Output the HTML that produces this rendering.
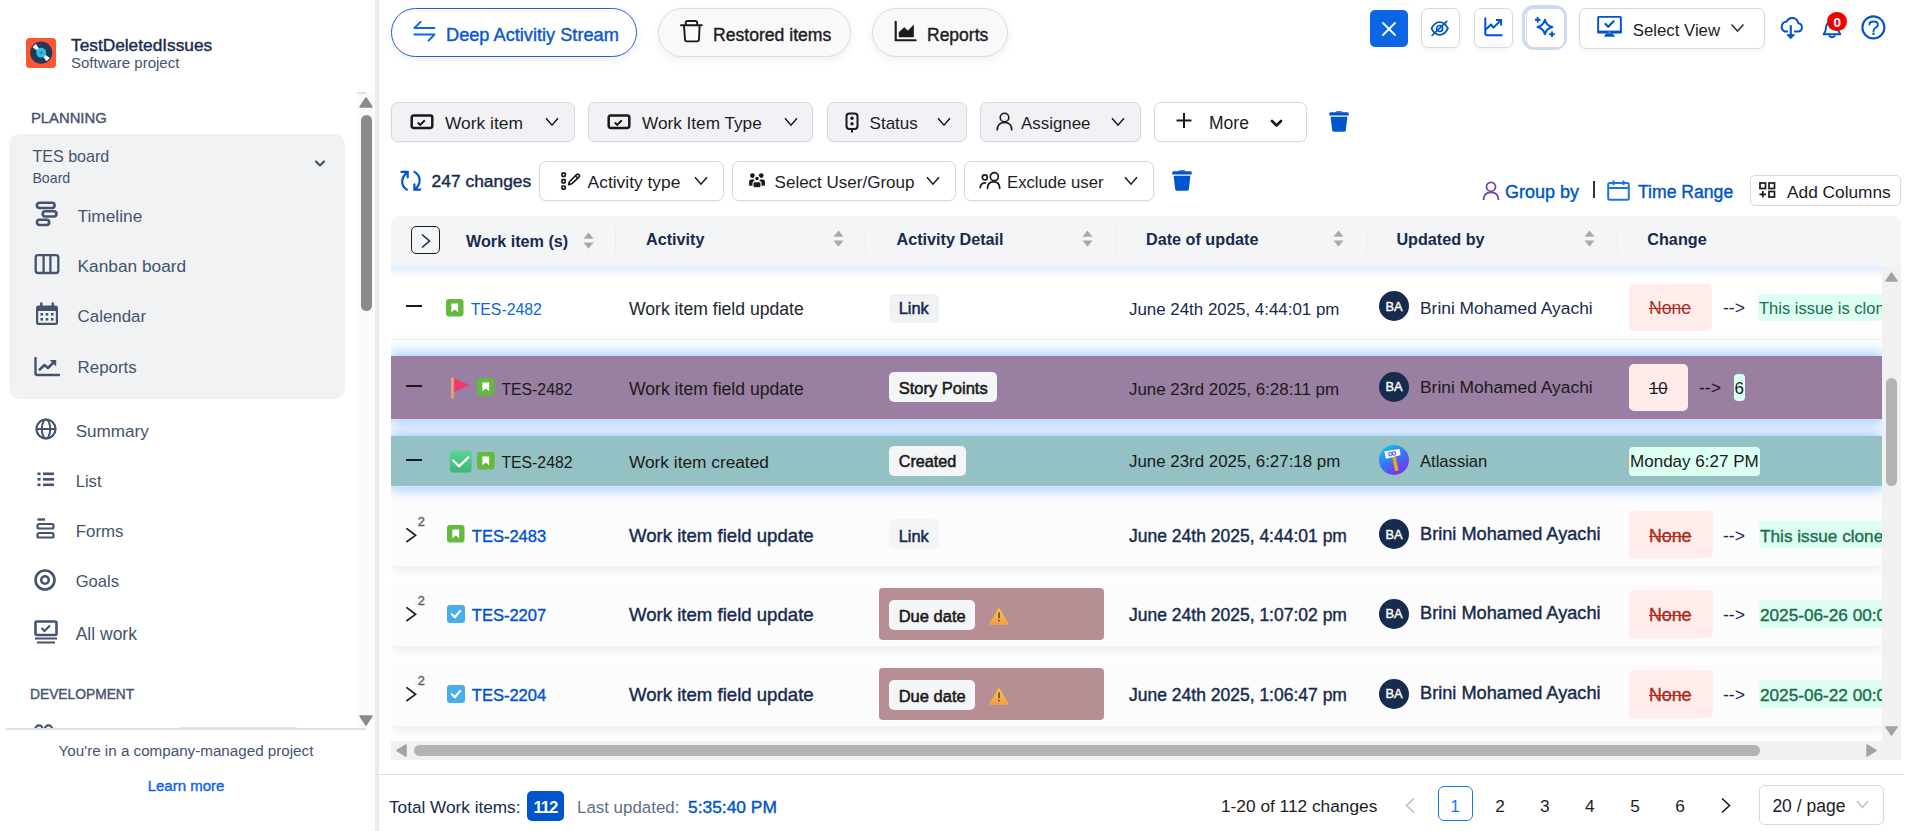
<!DOCTYPE html>
<html><head><meta charset="utf-8"><title>Deep Activity Stream</title>
<style>
html,body{margin:0;padding:0;background:#fff;width:1915px;height:831px;overflow:hidden}
body{position:relative;font-family:"Liberation Sans",sans-serif}
.t{position:absolute;white-space:nowrap;line-height:1}
.b{position:absolute;box-sizing:content-box}
</style></head><body>
<svg class="b" style="left:26px;top:38px" width="30" height="30" viewBox="0 0 30 30">
<rect width="30" height="30" rx="3.5" fill="#ff5630"/>
<circle cx="15.2" cy="14.7" r="11.1" fill="#253858"/>
<g transform="translate(15.2 14.7) rotate(45)" fill="#fff"><path d="M-9.9 -2.3 V2.3 L-4.3 1.4 V-1.4 Z"/><path d="M9.9 -2.3 V2.3 L4.3 1.4 V-1.4 Z"/></g>
<circle cx="15.2" cy="14.7" r="4.9" fill="#1fc7e8"/>
<circle cx="15.2" cy="14.7" r="1.6" fill="#8a5bd8"/>
</svg>
<div class="t" style="left:71px;top:37.00px;font-size:17.3px;font-weight:400;color:#172b4d;-webkit-text-stroke:0.4px currentColor;">TestDeletedIssues</div>
<div class="t" style="left:71px;top:55.00px;font-size:15px;font-weight:400;color:#44546f;">Software project</div>
<div class="t" style="left:31px;top:111.00px;font-size:14.8px;font-weight:400;color:#44546f;-webkit-text-stroke:0.4px currentColor;">PLANNING</div>
<div class="b" style="left:9px;top:134px;width:336px;height:265px;background:#f1f2f4;border-radius:10px"></div>
<div class="t" style="left:32.4px;top:148.00px;font-size:16.1px;font-weight:400;color:#44546f;">TES board</div>
<div class="t" style="left:32.4px;top:171.00px;font-size:14.2px;font-weight:400;color:#44546f;">Board</div>
<svg class="b" style="left:314px;top:159px;" width="12" height="10" viewBox="0 0 12 10" fill="none"><path d="M2 2.5 L6 6.5 L10 2.5" stroke="#44546f" stroke-width="2.2" stroke-linecap="round" stroke-linejoin="round"/></svg>
<svg class="b" style="left:35px;top:201px;" width="24" height="26" viewBox="0 0 24 26" fill="none"><rect x="1.9" y="1.7" width="17.7" height="5.3" rx="2.65" stroke="#44546f" stroke-width="2.6"/><rect x="7.7" y="10.2" width="13.8" height="5.3" rx="2.65" stroke="#44546f" stroke-width="2.6"/><rect x="1.9" y="18.7" width="12.3" height="5.3" rx="2.65" stroke="#44546f" stroke-width="2.6"/></svg>
<div class="t" style="left:77.6px;top:208.00px;font-size:17.3px;font-weight:400;color:#44546f;">Timeline</div>
<svg class="b" style="left:34px;top:253px;" width="26" height="22" viewBox="0 0 26 22" fill="none"><rect x="1.7" y="2.2" width="22.6" height="17.8" rx="2.2" stroke="#44546f" stroke-width="2.3"/><path d="M9.6 2.5 V19.5 M16.4 2.5 V19.5" stroke="#44546f" stroke-width="2.3"/></svg>
<div class="t" style="left:77.6px;top:258.00px;font-size:17.3px;font-weight:400;color:#44546f;">Kanban board</div>
<svg class="b" style="left:35px;top:302px;" width="24" height="24" viewBox="0 0 24 24" fill="none"><rect x="1" y="3.5" width="22" height="19.5" rx="2.5" fill="#44546f"/><rect x="3.2" y="9" width="17.6" height="11.8" fill="#f1f2f4"/><rect x="5" y="0.5" width="2.5" height="5" fill="#44546f"/><rect x="16.5" y="0.5" width="2.5" height="5" fill="#44546f"/><g fill="#44546f"><rect x="5.5" y="11" width="2.6" height="2.6"/><rect x="10.7" y="11" width="2.6" height="2.6"/><rect x="15.9" y="11" width="2.6" height="2.6"/><rect x="5.5" y="16" width="2.6" height="2.6"/><rect x="10.7" y="16" width="2.6" height="2.6"/><rect x="15.9" y="16" width="2.6" height="2.6"/></g></svg>
<div class="t" style="left:77.6px;top:309.00px;font-size:16.9px;font-weight:400;color:#44546f;">Calendar</div>
<svg class="b" style="left:34px;top:357px;" width="26" height="20" viewBox="0 0 26 20" fill="none"><path d="M1.5 1 V16 Q1.5 18 3.5 18 H25" stroke="#44546f" stroke-width="2.4" stroke-linecap="round"/><path d="M5.8 12.5 L10.5 8 L14 11 L20.5 4.5" stroke="#44546f" stroke-width="2.6" stroke-linejoin="round" stroke-linecap="round"/><path d="M15.8 3 H22.2 V9.4 Z" fill="#44546f"/></svg>
<div class="t" style="left:77.6px;top:360.00px;font-size:16.9px;font-weight:400;color:#44546f;">Reports</div>
<svg class="b" style="left:35px;top:418px;" width="22" height="22" viewBox="0 0 22 22" fill="none"><circle cx="11" cy="11" r="9.5" stroke="#44546f" stroke-width="2.2"/><ellipse cx="11" cy="11" rx="4.2" ry="9.5" stroke="#44546f" stroke-width="2"/><path d="M1.5 11 H20.5" stroke="#44546f" stroke-width="2"/></svg>
<div class="t" style="left:75.7px;top:423.00px;font-size:17.1px;font-weight:400;color:#44546f;">Summary</div>
<svg class="b" style="left:37px;top:472px;" width="18" height="15" viewBox="0 0 18 15" fill="none"><g fill="#44546f"><rect x="0.5" y="0.5" width="3" height="2.6"/><rect x="0.5" y="6" width="3" height="2.6"/><rect x="0.5" y="11.5" width="3" height="2.6"/><rect x="6" y="0.5" width="11" height="2.6"/><rect x="6" y="6" width="11" height="2.6"/><rect x="6" y="11.5" width="11" height="2.6"/></g></svg>
<div class="t" style="left:75.7px;top:474.00px;font-size:16.6px;font-weight:400;color:#44546f;">List</div>
<svg class="b" style="left:36px;top:518px;" width="20" height="22" viewBox="0 0 20 22" fill="none"><path d="M1.5 1.5 H9" stroke="#44546f" stroke-width="2.4"/><rect x="1.5" y="6" width="16" height="4.5" rx="1.5" stroke="#44546f" stroke-width="2.2"/><rect x="1.5" y="15" width="16" height="4.5" rx="1.5" stroke="#44546f" stroke-width="2.2"/></svg>
<div class="t" style="left:75.7px;top:524.00px;font-size:16.9px;font-weight:400;color:#44546f;">Forms</div>
<svg class="b" style="left:34px;top:569px;" width="22" height="22" viewBox="0 0 22 22" fill="none"><circle cx="11" cy="11" r="9.5" stroke="#44546f" stroke-width="2.6"/><circle cx="11" cy="11" r="3.8" stroke="#44546f" stroke-width="2.6"/></svg>
<div class="t" style="left:75.7px;top:574.00px;font-size:16.6px;font-weight:400;color:#44546f;">Goals</div>
<svg class="b" style="left:34px;top:620px;" width="24" height="24" viewBox="0 0 24 24" fill="none"><rect x="1.5" y="1.5" width="21" height="13.5" rx="1.5" stroke="#44546f" stroke-width="2.6"/><path d="M7.5 8 L10.5 11 L16 5.5" stroke="#44546f" stroke-width="2.2"/><path d="M1 18.5 H23 M3 22.5 H21" stroke="#44546f" stroke-width="2.2"/></svg>
<div class="t" style="left:75.7px;top:626.00px;font-size:17.5px;font-weight:400;color:#44546f;">All work</div>
<div class="t" style="left:30px;top:688.00px;font-size:13.8px;font-weight:400;color:#44546f;-webkit-text-stroke:0.4px currentColor;">DEVELOPMENT</div>
<svg class="b" style="left:34px;top:724px;" width="20" height="5" viewBox="0 0 20 5" fill="none"><circle cx="5" cy="5" r="3.6" stroke="#44546f" stroke-width="2.2"/><circle cx="14.5" cy="5" r="3.6" stroke="#44546f" stroke-width="2.2"/></svg>
<div class="b" style="left:179px;top:727px;width:118px;height:2px;background:#e6e4f4"></div>
<div class="b" style="left:357px;top:92px;width:18px;height:637px;background:#fafafa"></div>
<div class="b" style="left:357px;top:92px;width:9px;height:2px;background:#dde0e5"></div>
<svg class="b" style="left:359px;top:97px;" width="14" height="11" viewBox="0 0 14 11" fill="none"><path d="M7 1 L13 10 H1 Z" fill="#8a8a8a" stroke="#8a8a8a" stroke-linejoin="round" stroke-width="1.5"/></svg>
<div class="b" style="left:361px;top:115px;width:11px;height:196px;background:#8b8b8b;border-radius:6px"></div>
<svg class="b" style="left:359px;top:715px;" width="14" height="11" viewBox="0 0 14 11" fill="none"><path d="M1 1 H13 L7 10 Z" fill="#8a8a8a" stroke="#8a8a8a" stroke-linejoin="round" stroke-width="1.5"/></svg>
<div class="b" style="left:6px;top:728px;width:360px;height:2px;background:#dcdfe4"></div>
<div class="t" style="left:186px;top:743.00px;font-size:15.2px;font-weight:400;color:#44546f;transform:translateX(-50%);">You're in a company-managed project</div>
<div class="t" style="left:186px;top:778.00px;font-size:15px;font-weight:400;color:#0c66e4;transform:translateX(-50%);-webkit-text-stroke:0.4px currentColor;">Learn more</div>
<div class="b" style="left:375px;top:0px;width:4px;height:831px;background:#ebecf0"></div>
<div class="b" style="left:391px;top:8px;width:244px;height:47px;border:1.5px solid #1d62d8;border-radius:26px;background:#fff;box-shadow:0 3px 8px rgba(0,0,0,.07)"></div>
<svg class="b" style="left:413px;top:21px;" width="23" height="22" viewBox="0 0 23 22" fill="none"><path d="M7.6 0.9 L1.4 7 H21.4" stroke="#0c66e4" stroke-width="2" stroke-linecap="round" stroke-linejoin="round"/><path d="M1.4 13.6 H21.4 L15.6 19.6" stroke="#0c66e4" stroke-width="2" stroke-linecap="round" stroke-linejoin="round"/></svg>
<div class="t" style="left:446px;top:26.00px;font-size:18.2px;font-weight:400;color:#0b57d0;-webkit-text-stroke:0.4px currentColor;">Deep Activitiy Stream</div>
<div class="b" style="left:658px;top:8px;width:191px;height:47px;border:1px solid #dcdcdc;border-radius:26px;background:#f9f9f9;box-shadow:0 3px 8px rgba(0,0,0,.07)"></div>
<svg class="b" style="left:680px;top:19px;" width="23" height="25" viewBox="0 0 23 25" fill="none"><path d="M1 6.3 H21.8" stroke="#1a1a1a" stroke-width="1.9" stroke-linecap="round"/><path d="M5.7 6 V4 Q5.7 2 7.7 2 H15.2 Q17.2 2 17.2 4 V6" stroke="#1a1a1a" stroke-width="1.9"/><path d="M4 6.7 L5 20.5 Q5.2 22.4 7 22.4 H17 Q18.8 22.4 19 20.5 L19.6 6.7" stroke="#1a1a1a" stroke-width="1.9" stroke-linejoin="round"/></svg>
<div class="t" style="left:713px;top:27.00px;font-size:17.6px;font-weight:400;color:#1d1d1f;-webkit-text-stroke:0.4px currentColor;">Restored items</div>
<div class="b" style="left:872px;top:8px;width:134px;height:47px;border:1px solid #dcdcdc;border-radius:26px;background:#f9f9f9;box-shadow:0 3px 8px rgba(0,0,0,.07)"></div>
<svg class="b" style="left:893px;top:20px;" width="24" height="22" viewBox="0 0 24 22" fill="none"><path d="M2.7 1.7 V20.3 H22.7" stroke="#1a1a1a" stroke-width="2.1" stroke-linecap="round"/><path d="M6.1 12.3 L11.2 7.6 L14.9 11 L20.6 5.1 V16.9 H6.1 Z" fill="#1a1a1a" stroke="#1a1a1a" stroke-width=".6" stroke-linejoin="round"/></svg>
<div class="t" style="left:927px;top:27.00px;font-size:17.5px;font-weight:400;color:#1d1d1f;-webkit-text-stroke:0.4px currentColor;">Reports</div>
<div class="b" style="left:1370px;top:10px;width:38px;height:37px;background:#0c66e4;border-radius:5px"></div>
<svg class="b" style="left:1382px;top:22px;" width="14" height="14" viewBox="0 0 14 14" fill="none"><path d="M1 1 L13 13 M13 1 L1 13" stroke="#fff" stroke-width="1.8" stroke-linecap="round"/></svg>
<div class="b" style="left:1420.5px;top:8px;width:37px;height:38px;border:1px solid #d9d9d9;border-radius:7px;background:#fff;box-shadow:0 2px 4px rgba(0,0,0,.05)"></div>
<div class="b" style="left:1473.5px;top:8px;width:37px;height:38px;border:1px solid #d9d9d9;border-radius:7px;background:#fff;box-shadow:0 2px 4px rgba(0,0,0,.05)"></div>
<div class="b" style="left:1521.75px;top:4.5px;width:38.75px;height:39px;border:3.75px solid #c8dbf4;border-radius:12px"></div>
<div class="b" style="left:1525.5px;top:8.25px;width:37px;height:37.3px;border:1px solid #d8d8d8;border-radius:8px;background:#fff"></div>
<svg class="b" style="left:1430px;top:19px;" width="20" height="18" viewBox="0 0 20 18" fill="none"><path d="M1.5 9.5 C4 4.5 7 3.2 9.7 3.2 C12.4 3.2 15.4 4.5 17.9 9.5 C15.4 14.5 12.4 15.8 9.7 15.8 C7 15.8 4 14.5 1.5 9.5 Z" stroke="#0055cc" stroke-width="1.7"/><circle cx="9.6" cy="9.5" r="3" stroke="#0055cc" stroke-width="1.7"/><path d="M16.8 2.4 L2.1 16.5" stroke="#0055cc" stroke-width="1.7" stroke-linecap="round"/></svg>
<svg class="b" style="left:1483px;top:17px;" width="20" height="20" viewBox="0 0 20 20" fill="none"><path d="M2.3 1.3 V16.3 Q2.3 18.3 4.3 18.3 H18.7" stroke="#0055cc" stroke-width="2" stroke-linecap="round"/><path d="M2.3 12.9 L8 7.5 L10.5 10.6 L18.1 3" stroke="#0055cc" stroke-width="2" stroke-linejoin="round"/><path d="M13 3 H18.1 V8.4" stroke="#0055cc" stroke-width="2"/></svg>
<svg class="b" style="left:1534px;top:17px;" width="24" height="22" viewBox="0 0 24 22" fill="none"><path d="M10.9 2.7 Q12.4 8.5 18.3 10 Q12.4 11.5 10.9 17.3 Q9.4 11.5 3.5 10 Q9.4 8.5 10.9 2.7 Z" stroke="#0055cc" stroke-width="2" stroke-linejoin="round"/><path d="M3.7 0 V5.6 M0.9 2.8 H6.5" stroke="#0055cc" stroke-width="1.9"/><path d="M18 14.4 V20 M15.2 17.2 H20.8" stroke="#0055cc" stroke-width="1.9"/></svg>
<div class="b" style="left:1578.5px;top:8px;width:184px;height:38.5px;border:1px solid #d9d9d9;border-radius:7px;background:#fff;box-shadow:0 2px 4px rgba(0,0,0,.05)"></div>
<svg class="b" style="left:1597px;top:15px;" width="26" height="23" viewBox="0 0 26 23" fill="none"><rect x="1.15" y="1.85" width="22.7" height="15.4" stroke="#0055cc" stroke-width="1.9" rx=".6"/><path d="M0.5 17 H24.5" stroke="#0055cc" stroke-width="2.8"/><path d="M8.4 8.9 L11.3 11.8 L16.6 6.2" stroke="#0055cc" stroke-width="2.1" stroke-linecap="round" stroke-linejoin="round"/><path d="M9 18.6 H16 L18 21.7 H7 Z" fill="#0055cc"/><circle cx="12.5" cy="17" r=".6" fill="#fff"/></svg>
<div class="t" style="left:1632.7px;top:23.00px;font-size:16.8px;font-weight:400;color:#1d1d1f;">Select View</div>
<svg class="b" style="left:1730px;top:23px;" width="15" height="10" viewBox="0 0 15 10" fill="none"><path d="M1.5 1.5 L7.5 8 L13.5 1.5" stroke="#333" stroke-width="1.6"/></svg>
<svg class="b" style="left:1778px;top:16px;" width="27" height="24" viewBox="0 0 27 24" fill="none"><path d="M10 15.5 H6.8 A5.3 5.3 0 0 1 8.7 5.4 A6.1 6.1 0 0 1 20.2 7.2 A4.2 4.2 0 0 1 20.5 15.5 H16" stroke="#0055cc" stroke-width="2" stroke-linejoin="round"/><path d="M12.8 9.2 V19.5" stroke="#0055cc" stroke-width="2.1"/><path d="M9.3 18.8 L12.8 22.4 L16.3 18.8 Z" fill="#0055cc" stroke="#0055cc" stroke-width="1.2" stroke-linejoin="round"/></svg>
<svg class="b" style="left:1822px;top:19px;" width="20" height="20" viewBox="0 0 20 20" fill="none"><path d="M1.6 15.2 Q3.8 13 3.8 9.5 Q3.8 3.2 10 3.2 Q16.2 3.2 16.2 9.5 Q16.2 13 18.4 15.2 Z" stroke="#0055cc" stroke-width="1.9" stroke-linejoin="round"/><path d="M7 16.3 Q10 20.2 13.2 16.3" stroke="#0055cc" stroke-width="1.9"/></svg>
<div class="b" style="left:1827px;top:11.6px;width:19.8px;height:19.8px;border-radius:50%;background:#f00000"></div>
<div class="t" style="left:1837.3px;top:16.00px;font-size:13.5px;font-weight:700;color:#fff;transform:translateX(-50%);">0</div>
<svg class="b" style="left:1860px;top:14px;" width="27" height="27" viewBox="0 0 27 27" fill="none"><circle cx="13.4" cy="13.4" r="11" stroke="#0055cc" stroke-width="2.1"/><path d="M9.4 10.6 Q9.4 7.5 13.5 7.5 Q17.9 7.5 17.9 10.6 Q17.9 12.8 15.2 14 Q13.5 14.8 13.5 17.2" stroke="#0055cc" stroke-width="1.9" stroke-linecap="round"/><circle cx="13.5" cy="19.8" r="1.25" fill="#0055cc"/></svg>
<div class="b" style="left:391px;top:102px;width:182px;height:38px;border:1px solid #d8d8dc;border-radius:7px;background:#f2f2f6;box-shadow:0 1px 2px rgba(0,0,0,.05)"></div>
<svg class="b" style="left:410px;top:114px;" width="24" height="16" viewBox="0 0 24 16" fill="none"><rect x="1.7" y="1.5" width="20.6" height="12.4" rx="1.8" stroke="#1a1a1a" stroke-width="2.5"/><path d="M7.8 8.6 L10.2 10.9 L14.8 6.3" stroke="#1a1a1a" stroke-width="2.1"/></svg>
<div class="t" style="left:445px;top:115.00px;font-size:17.4px;font-weight:400;color:#1d1d1f;">Work item</div>
<svg class="b" style="left:544.5px;top:116.5px;" width="14" height="10" viewBox="0 0 14 10" fill="none"><path d="M1 1.2 L7 8.2 L13 1.2" stroke="#1a1a1a" stroke-width="1.5"/></svg>
<div class="b" style="left:588px;top:102px;width:223px;height:38px;border:1px solid #d8d8dc;border-radius:7px;background:#f2f2f6;box-shadow:0 1px 2px rgba(0,0,0,.05)"></div>
<svg class="b" style="left:607px;top:114px;" width="24" height="16" viewBox="0 0 24 16" fill="none"><rect x="1.7" y="1.5" width="20.6" height="12.4" rx="1.8" stroke="#1a1a1a" stroke-width="2.5"/><path d="M7.8 8.6 L10.2 10.9 L14.8 6.3" stroke="#1a1a1a" stroke-width="2.1"/></svg>
<div class="t" style="left:642px;top:115.00px;font-size:17.2px;font-weight:400;color:#1d1d1f;">Work Item Type</div>
<svg class="b" style="left:784px;top:116.5px;" width="14" height="10" viewBox="0 0 14 10" fill="none"><path d="M1 1.2 L7 8.2 L13 1.2" stroke="#1a1a1a" stroke-width="1.5"/></svg>
<div class="b" style="left:826.5px;top:102px;width:138.5px;height:38px;border:1px solid #d8d8dc;border-radius:7px;background:#f2f2f6;box-shadow:0 1px 2px rgba(0,0,0,.05)"></div>
<svg class="b" style="left:845px;top:112px;" width="14" height="21" viewBox="0 0 14 21" fill="none"><rect x="1.5" y="1.5" width="11" height="15.5" rx="3" stroke="#1a1a1a" stroke-width="2"/><circle cx="7" cy="6.2" r="1.7" fill="#1a1a1a"/><circle cx="7" cy="11.8" r="1.7" fill="#1a1a1a"/><path d="M7 17 V20.5" stroke="#1a1a1a" stroke-width="2"/></svg>
<div class="t" style="left:869.6px;top:115.00px;font-size:17px;font-weight:400;color:#1d1d1f;">Status</div>
<svg class="b" style="left:936.5px;top:116.5px;" width="14" height="10" viewBox="0 0 14 10" fill="none"><path d="M1 1.2 L7 8.2 L13 1.2" stroke="#1a1a1a" stroke-width="1.5"/></svg>
<div class="b" style="left:980px;top:102px;width:159px;height:38px;border:1px solid #d8d8dc;border-radius:7px;background:#f2f2f6;box-shadow:0 1px 2px rgba(0,0,0,.05)"></div>
<svg class="b" style="left:996px;top:112px;" width="17" height="19" viewBox="0 0 17 19" fill="none"><circle cx="8.5" cy="5.5" r="4.3" stroke="#1a1a1a" stroke-width="1.6"/><path d="M1.2 18.5 Q1.2 10.5 8.5 10.5 Q15.8 10.5 15.8 18.5" stroke="#1a1a1a" stroke-width="1.6"/></svg>
<div class="t" style="left:1021px;top:116.00px;font-size:16.9px;font-weight:400;color:#1d1d1f;">Assignee</div>
<svg class="b" style="left:1110.5px;top:116.5px;" width="14" height="10" viewBox="0 0 14 10" fill="none"><path d="M1 1.2 L7 8.2 L13 1.2" stroke="#1a1a1a" stroke-width="1.5"/></svg>
<div class="b" style="left:1153.5px;top:102px;width:151.5px;height:38px;border:1px solid #d8d8dc;border-radius:7px;background:#fff;box-shadow:0 1px 2px rgba(0,0,0,.05)"></div>
<svg class="b" style="left:1175px;top:112px;" width="18" height="18" viewBox="0 0 18 18" fill="none"><path d="M9 1 V16 M1.5 8.5 H16.5" stroke="#1a1a1a" stroke-width="2"/></svg>
<div class="t" style="left:1209px;top:115.00px;font-size:17.5px;font-weight:400;color:#1d1d1f;">More</div>
<svg class="b" style="left:1270px;top:119px;" width="13" height="9" viewBox="0 0 13 9" fill="none"><path d="M2 2 L6.5 6.5 L11 2" stroke="#1a1a1a" stroke-width="2.6" stroke-linecap="round" stroke-linejoin="round"/></svg>
<svg class="b" style="left:1329px;top:111px;" width="20" height="21" viewBox="0 0 20 21" fill="none"><path d="M6.3 1.6 Q6.6 0.2 8 0.2 H12 Q13.4 0.2 13.7 1.6 Z" fill="#0055cc"/><path d="M0.3 2.6 Q0.3 1.3 1.8 1.3 H18.2 Q19.7 1.3 19.7 2.6 V4.6 H0.3 Z" fill="#0055cc"/><path d="M1.6 5.8 H18.4 L16.8 19.3 Q16.6 20.7 15.2 20.7 H4.8 Q3.4 20.7 3.2 19.3 Z" fill="#0055cc"/></svg>
<svg class="b" style="left:399px;top:169px;" width="23" height="23" viewBox="0 0 23 23" fill="none"><path d="M7.9 20.6 C4.5 18.6 3.1 15.6 3.2 12.3 C3.3 8.8 5 6 8.2 3.3" stroke="#0055cc" stroke-width="2.2" stroke-linecap="round"/><path d="M2.5 2.9 H8.7 V8.3" stroke="#0055cc" stroke-width="2.2" stroke-linecap="round"/><path d="M15.4 2.9 C18.8 4.8 20.6 8 20.6 11.4 C20.6 14.8 19 17.6 15.9 20.1" stroke="#0055cc" stroke-width="2.2" stroke-linecap="round"/><path d="M15.4 15.3 V20.6 H21.2" stroke="#0055cc" stroke-width="2.2" stroke-linecap="round"/></svg>
<div class="t" style="left:431.6px;top:173.00px;font-size:17.4px;font-weight:400;color:#172b4d;-webkit-text-stroke:0.4px currentColor;">247 changes</div>
<div class="b" style="left:538.5px;top:161px;width:183.0px;height:37.5px;border:1px solid #d8d8dc;border-radius:7px;background:#fff;box-shadow:0 1px 2px rgba(0,0,0,.05)"></div>
<svg class="b" style="left:560px;top:172px;" width="21" height="21" viewBox="0 0 21 21" fill="none"><rect x="2" y="1.1" width="3.2" height="3.2" rx=".6" stroke="#1a1a1a" stroke-width="1.7"/><rect x="2" y="7.7" width="3.2" height="3.2" rx=".6" stroke="#1a1a1a" stroke-width="1.7"/><rect x="2" y="14" width="3.2" height="3.2" rx=".6" stroke="#1a1a1a" stroke-width="1.7"/><path d="M8.6 12.6 L9.6 9.5 L16.6 2.7 Q17.8 1.6 19 2.8 Q20.1 4 18.9 5.1 L11.9 11.7 Z" stroke="#1a1a1a" stroke-width="1.7" stroke-linejoin="round"/><path d="M15.5 3.8 L17.9 6.2" stroke="#1a1a1a" stroke-width="1.4"/></svg>
<div class="t" style="left:587.6px;top:174.00px;font-size:17.4px;font-weight:400;color:#1d1d1f;">Activity type</div>
<svg class="b" style="left:693.5px;top:176px;" width="14" height="10" viewBox="0 0 14 10" fill="none"><path d="M1 1.2 L7 8.2 L13 1.2" stroke="#1a1a1a" stroke-width="1.5"/></svg>
<div class="b" style="left:731.5px;top:161px;width:222.5px;height:37.5px;border:1px solid #d8d8dc;border-radius:7px;background:#fff;box-shadow:0 1px 2px rgba(0,0,0,.05)"></div>
<svg class="b" style="left:747px;top:172px;" width="20" height="17" viewBox="0 0 20 17" fill="none"><g fill="#1a1a1a"><circle cx="5.4" cy="3.6" r="2.4"/><circle cx="14.2" cy="3.6" r="2.4"/><path d="M2.1 13.6 V9.6 Q2.1 7.5 4.2 7.5 H7.5 V13.6 Q4.5 14 2.1 13.6 Z"/><path d="M17.9 13.6 V9.6 Q17.9 7.5 15.8 7.5 H12.5 V13.6 Q15.5 14 17.9 13.6 Z"/></g><circle cx="10" cy="6.4" r="2.3" fill="#1a1a1a" stroke="#fff" stroke-width="1.1"/><rect x="6" y="9.6" width="8" height="6.2" rx="1.6" fill="#1a1a1a" stroke="#fff" stroke-width="1.1"/></svg>
<div class="t" style="left:774.6px;top:174.00px;font-size:17px;font-weight:400;color:#1d1d1f;">Select User/Group</div>
<svg class="b" style="left:926px;top:176px;" width="14" height="10" viewBox="0 0 14 10" fill="none"><path d="M1 1.2 L7 8.2 L13 1.2" stroke="#1a1a1a" stroke-width="1.5"/></svg>
<div class="b" style="left:964px;top:161px;width:188px;height:37.5px;border:1px solid #d8d8dc;border-radius:7px;background:#fff;box-shadow:0 1px 2px rgba(0,0,0,.05)"></div>
<svg class="b" style="left:979px;top:171px;" width="22" height="19" viewBox="0 0 22 19" fill="none"><circle cx="5.8" cy="6.4" r="2.5" stroke="#1a1a1a" stroke-width="1.7"/><path d="M1.2 16.6 Q1.5 11.8 6.5 11.8" stroke="#1a1a1a" stroke-width="1.7" stroke-linecap="round"/><circle cx="15.3" cy="5.7" r="4" stroke="#1a1a1a" stroke-width="1.7"/><path d="M8.5 17.3 Q8.5 10.8 14.6 10.8 Q20.7 10.8 20.7 17.3" stroke="#1a1a1a" stroke-width="1.7" stroke-linecap="round"/></svg>
<div class="t" style="left:1007px;top:175.00px;font-size:16.7px;font-weight:400;color:#1d1d1f;">Exclude user</div>
<svg class="b" style="left:1124px;top:176px;" width="14" height="10" viewBox="0 0 14 10" fill="none"><path d="M1 1.2 L7 8.2 L13 1.2" stroke="#1a1a1a" stroke-width="1.5"/></svg>
<svg class="b" style="left:1172px;top:170px;" width="20" height="21" viewBox="0 0 20 21" fill="none"><path d="M6.3 1.6 Q6.6 0.2 8 0.2 H12 Q13.4 0.2 13.7 1.6 Z" fill="#0055cc"/><path d="M0.3 2.6 Q0.3 1.3 1.8 1.3 H18.2 Q19.7 1.3 19.7 2.6 V4.6 H0.3 Z" fill="#0055cc"/><path d="M1.6 5.8 H18.4 L16.8 19.3 Q16.6 20.7 15.2 20.7 H4.8 Q3.4 20.7 3.2 19.3 Z" fill="#0055cc"/></svg>
<svg class="b" style="left:1482px;top:181px;" width="18" height="20" viewBox="0 0 18 20" fill="none"><circle cx="9" cy="5.8" r="4.5" stroke="#7546a8" stroke-width="1.8"/><path d="M1.5 19 Q1.5 11.3 9 11.3 Q16.5 11.3 16.5 19" stroke="#7546a8" stroke-width="1.8"/></svg>
<div class="t" style="left:1505px;top:183.00px;font-size:18px;font-weight:400;color:#0055cc;-webkit-text-stroke:0.4px currentColor;">Group by</div>
<div class="b" style="left:1592.5px;top:181px;width:2.0px;height:17px;background:#333"></div>
<svg class="b" style="left:1607px;top:180px;" width="23" height="21" viewBox="0 0 23 21" fill="none"><rect x="1.2" y="3" width="20.6" height="16.8" rx="1.5" stroke="#1a73e8" stroke-width="2"/><path d="M1.5 8 H21.5 M6.5 0.5 V5 M16.5 0.5 V5" stroke="#1a73e8" stroke-width="2"/></svg>
<div class="t" style="left:1638px;top:184.00px;font-size:17.6px;font-weight:400;color:#0055cc;-webkit-text-stroke:0.4px currentColor;">Time Range</div>
<div class="b" style="left:1750px;top:174.5px;width:149px;height:29px;border:1px solid #d9d9d9;border-radius:5px;background:#fff"></div>
<svg class="b" style="left:1759px;top:182px;" width="17" height="16" viewBox="0 0 17 16" fill="none"><rect x="1" y="1" width="5.5" height="5.5" stroke="#1a1a1a" stroke-width="1.7"/><rect x="10" y="1" width="5.5" height="5.5" stroke="#1a1a1a" stroke-width="1.7"/><rect x="10" y="9.5" width="5.5" height="5.5" stroke="#1a1a1a" stroke-width="1.7"/><path d="M3.8 9 V15.5 M0.5 12.3 H7" stroke="#1a1a1a" stroke-width="1.7"/></svg>
<div class="t" style="left:1787px;top:184.00px;font-size:17.3px;font-weight:400;color:#1d1d1f;">Add Columns</div>
<div style="position:absolute;left:0;top:0;width:1915px;height:831px;clip-path:inset(266px 33px 90px 391px)">
<div class="b" style="left:391px;top:266px;width:1491px;height:74px;background:#fff;border-bottom:1px solid #ebecf0;box-sizing:border-box"></div>
<div class="b" style="left:391px;top:266px;width:1491px;height:12px;background:linear-gradient(#deedfd,rgba(255,255,255,0))"></div>
<div class="b" style="left:391px;top:356px;width:1491px;height:64px;background:#997fa1;box-shadow:0 0 14px 2px rgba(60,150,255,.55);border-bottom:1px solid #e8dfe6;box-sizing:border-box"></div>
<div class="b" style="left:391px;top:436px;width:1491px;height:51px;background:#94c1c3;box-shadow:0 0 14px 2px rgba(60,150,255,.55);border-bottom:1px solid #dde9ea;box-sizing:border-box"></div>
<div class="b" style="left:391px;top:503px;width:1491px;height:63px;background:#fcfcfd;box-shadow:0 5px 10px rgba(0,0,0,.07)"></div>
<div class="b" style="left:391px;top:583px;width:1491px;height:62.5px;background:#fcfcfd;box-shadow:0 5px 10px rgba(0,0,0,.07)"></div>
<div class="b" style="left:391px;top:662px;width:1491px;height:63.5px;background:#fcfcfd;box-shadow:0 5px 10px rgba(0,0,0,.07)"></div>
</div>
<div class="b" style="left:391px;top:215.5px;width:1510px;height:50.5px;background:#f4f5f7;border-radius:8px 8px 0 0"></div>
<div class="b" style="left:411px;top:226.3px;width:26.6px;height:26.2px;border:1.6px solid #1d1d1d;border-radius:5px"></div>
<svg class="b" style="left:419px;top:233px;" width="14" height="16" viewBox="0 0 14 16" fill="none"><path d="M3 1.5 L10.5 8 L3 14.5" stroke="#172b4d" stroke-width="1.6"/></svg>
<div class="t" style="left:466px;top:233.00px;font-size:16.2px;font-weight:700;color:#172b4d;">Work item (s)</div>
<svg class="b" style="left:583px;top:232px;" width="11" height="18" viewBox="0 0 11 18" fill="none"><path d="M5.5 0.5 L10.5 6.8 H0.5 Z M5.5 16.7 L10.5 10.4 H0.5 Z" fill="#a9a9a9"/></svg>
<div class="b" style="left:615px;top:228px;width:1px;height:26px;background:#eaebee"></div>
<div class="t" style="left:646px;top:231.00px;font-size:16.2px;font-weight:700;color:#172b4d;">Activity</div>
<div class="b" style="left:865px;top:228px;width:1px;height:26px;background:#eaebee"></div>
<div class="t" style="left:896.5px;top:231.00px;font-size:16.2px;font-weight:700;color:#172b4d;">Activity Detail</div>
<div class="b" style="left:1115.5px;top:228px;width:1.0px;height:26px;background:#eaebee"></div>
<div class="t" style="left:1146px;top:231.00px;font-size:16.2px;font-weight:700;color:#172b4d;">Date of update</div>
<div class="b" style="left:1365.5px;top:228px;width:1.0px;height:26px;background:#eaebee"></div>
<div class="t" style="left:1396.4px;top:231.00px;font-size:16.2px;font-weight:700;color:#172b4d;">Updated by</div>
<div class="b" style="left:1617px;top:228px;width:1px;height:26px;background:#eaebee"></div>
<div class="t" style="left:1647.3px;top:231.00px;font-size:16.2px;font-weight:700;color:#172b4d;">Change</div>
<svg class="b" style="left:832.5px;top:230px;" width="11" height="18" viewBox="0 0 11 18" fill="none"><path d="M5.5 0.5 L10.5 6.8 H0.5 Z M5.5 16.7 L10.5 10.4 H0.5 Z" fill="#a9a9a9"/></svg>
<svg class="b" style="left:1082px;top:230px;" width="11" height="18" viewBox="0 0 11 18" fill="none"><path d="M5.5 0.5 L10.5 6.8 H0.5 Z M5.5 16.7 L10.5 10.4 H0.5 Z" fill="#a9a9a9"/></svg>
<svg class="b" style="left:1333px;top:230px;" width="11" height="18" viewBox="0 0 11 18" fill="none"><path d="M5.5 0.5 L10.5 6.8 H0.5 Z M5.5 16.7 L10.5 10.4 H0.5 Z" fill="#a9a9a9"/></svg>
<svg class="b" style="left:1583.5px;top:230px;" width="11" height="18" viewBox="0 0 11 18" fill="none"><path d="M5.5 0.5 L10.5 6.8 H0.5 Z M5.5 16.7 L10.5 10.4 H0.5 Z" fill="#a9a9a9"/></svg>
<div class="b" style="left:1882px;top:266px;width:19px;height:475px;background:#f1f1f1"></div>
<svg class="b" style="left:1885px;top:272px;" width="13" height="10" viewBox="0 0 13 10" fill="none"><path d="M6.5 1 L12 9 H1 Z" fill="#a3a3a3" stroke="#a3a3a3" stroke-linejoin="round" stroke-width="1.5"/></svg>
<div class="b" style="left:1886px;top:378px;width:11px;height:108px;background:#b3b3b3;border-radius:6px"></div>
<svg class="b" style="left:1885px;top:726px;" width="13" height="10" viewBox="0 0 13 10" fill="none"><path d="M1 1 H12 L6.5 9 Z" fill="#a3a3a3" stroke="#a3a3a3" stroke-linejoin="round" stroke-width="1.5"/></svg>
<div class="b" style="left:391px;top:741px;width:1510px;height:19px;background:#f1f1f1"></div>
<svg class="b" style="left:396px;top:744px;" width="11" height="13" viewBox="0 0 11 13" fill="none"><path d="M1 6.5 L10 1 V12 Z" fill="#a3a3a3" stroke="#a3a3a3" stroke-linejoin="round" stroke-width="1.5"/></svg>
<div class="b" style="left:414px;top:745px;width:1346px;height:11px;background:#b3b3b3;border-radius:6px"></div>
<svg class="b" style="left:1866px;top:744px;" width="11" height="13" viewBox="0 0 11 13" fill="none"><path d="M10 6.5 L1 1 V12 Z" fill="#a3a3a3" stroke="#a3a3a3" stroke-linejoin="round" stroke-width="1.5"/></svg>
<div class="b" style="left:406px;top:305px;width:16px;height:2px;background:#1a1a1a"></div>
<svg class="b" style="left:446px;top:299px;" width="17.5" height="17.5" viewBox="0 0 18 18" fill="none"><rect width="18" height="18" rx="3" fill="#63ba3c"/><path d="M5.5 4.5 H12.5 V13.5 L9 10.8 L5.5 13.5 Z" fill="#fff"/></svg>
<div class="t" style="left:470.7px;top:302.00px;font-size:15.8px;font-weight:400;color:#0c66e4;">TES-2482</div>
<div class="t" style="left:629px;top:301.00px;font-size:17.6px;font-weight:400;color:#22272b;">Work item field update</div>
<div class="b" style="left:889px;top:293.5px;width:50px;height:29.0px;background:#f1f2f4;border-radius:5px"></div>
<div class="t" style="left:898.7px;top:300.00px;font-size:16.4px;font-weight:400;color:#172b4d;-webkit-text-stroke:0.55px currentColor;">Link</div>
<div class="t" style="left:1129px;top:302.00px;font-size:16.9px;font-weight:400;color:#172b4d;">June 24th 2025, 4:44:01 pm</div>
<div class="b" style="left:1379px;top:291px;width:30px;height:30px;background:#172b4d;border-radius:50%"></div>
<div class="t" style="left:1394px;top:301.00px;font-size:12.8px;font-weight:400;color:#fff;transform:translateX(-50%);-webkit-text-stroke:0.4px currentColor;">BA</div>
<div class="t" style="left:1420px;top:300.00px;font-size:17.4px;font-weight:400;color:#172b4d;">Brini Mohamed Ayachi</div>
<div class="b" style="left:1629px;top:284px;width:83px;height:47px;background:#ffeceb;border-radius:5px"></div>
<div class="t" style="left:1649px;top:300.00px;font-size:17.6px;font-weight:400;color:#ae2e24;text-decoration:line-through;">None</div>
<div class="t" style="left:1723px;top:300.00px;font-size:17.6px;font-weight:400;color:#172b4d;">--&gt;</div>
<div class="b" style="left:1758px;top:294px;width:124px;height:26.5px;background:#dcfff1;border-radius:4px 0 0 4px;overflow:hidden"><div class="t" style="left:1px;top:5.5px;font-size:16.5px;color:#216e4e">This issue is cloned by TES-2483</div></div>
<div class="b" style="left:406px;top:385px;width:16px;height:2px;background:#1a1a1a"></div>
<svg class="b" style="left:449px;top:376px;" width="22" height="24" viewBox="0 0 22 24" fill="none"><defs><linearGradient id="fp" x1="0" y1="0" x2="1" y2="0"><stop offset="0" stop-color="#f3b48e"/><stop offset="1" stop-color="#d9865a"/></linearGradient></defs><rect x="2.3" y="1.3" width="3" height="21.2" rx="1.2" fill="url(#fp)"/><path d="M5.3 2 L20.8 9.2 L5.3 16 Z" fill="#ee3a6e"/></svg>
<svg class="b" style="left:477px;top:378px;" width="17.5" height="17.5" viewBox="0 0 18 18" fill="none"><rect width="18" height="18" rx="3" fill="#63ba3c"/><path d="M5.5 4.5 H12.5 V13.5 L9 10.8 L5.5 13.5 Z" fill="#fff"/></svg>
<div class="t" style="left:501.4px;top:382.00px;font-size:15.8px;font-weight:400;color:#1a1a1a;">TES-2482</div>
<div class="t" style="left:629px;top:381.00px;font-size:17.6px;font-weight:400;color:#1a1a1a;">Work item field update</div>
<div class="b" style="left:889px;top:372px;width:108px;height:30px;background:#f4f5f7;border-radius:5px"></div>
<div class="t" style="left:898.7px;top:380.00px;font-size:16.5px;font-weight:400;color:#1a1a1a;-webkit-text-stroke:0.55px currentColor;">Story Points</div>
<div class="t" style="left:1129px;top:382.00px;font-size:16.9px;font-weight:400;color:#1a1a1a;">June 23rd 2025, 6:28:11 pm</div>
<div class="b" style="left:1379px;top:371.5px;width:30px;height:30.0px;background:#172b4d;border-radius:50%"></div>
<div class="t" style="left:1394px;top:381.00px;font-size:12.8px;font-weight:400;color:#fff;transform:translateX(-50%);-webkit-text-stroke:0.4px currentColor;">BA</div>
<div class="t" style="left:1420px;top:379.00px;font-size:17.4px;font-weight:400;color:#1a1a1a;">Brini Mohamed Ayachi</div>
<div class="b" style="left:1629px;top:364px;width:59px;height:47px;background:#ffecea;border-radius:5px"></div>
<div class="t" style="left:1649px;top:381.00px;font-size:16.7px;font-weight:400;color:#1a1a1a;text-decoration:line-through">10</div>
<div class="t" style="left:1699px;top:380.00px;font-size:17.6px;font-weight:400;color:#1a1a1a;">--&gt;</div>
<div class="b" style="left:1734px;top:374px;width:10.5px;height:27px;background:#dcfff1;border-radius:4px"></div>
<div class="t" style="left:1734.5px;top:380.00px;font-size:17px;font-weight:400;color:#1a1a1a;">6</div>
<div class="b" style="left:406px;top:459px;width:16px;height:2px;background:#1a1a1a"></div>
<svg class="b" style="left:448.5px;top:449.5px;" width="23" height="23" viewBox="0 0 23 23" fill="none"><defs><linearGradient id="ck" x1="0" y1="0" x2="0" y2="1"><stop offset="0" stop-color="#5ad594"/><stop offset="1" stop-color="#3fb57a"/></linearGradient></defs><rect x="0.8" y="0.6" width="21.8" height="21.9" rx="3.2" fill="url(#ck)"/><path d="M4.1 10.5 L10 16.3 L19.3 7.3" stroke="#fff" stroke-width="2.3" stroke-linecap="round" stroke-linejoin="round"/></svg>
<svg class="b" style="left:477px;top:452px;" width="17.5" height="17.5" viewBox="0 0 18 18" fill="none"><rect width="18" height="18" rx="3" fill="#63ba3c"/><path d="M5.5 4.5 H12.5 V13.5 L9 10.8 L5.5 13.5 Z" fill="#fff"/></svg>
<div class="t" style="left:501.4px;top:455.00px;font-size:15.8px;font-weight:400;color:#1a1a1a;">TES-2482</div>
<div class="t" style="left:629px;top:454.00px;font-size:17.3px;font-weight:400;color:#1a1a1a;">Work item created</div>
<div class="b" style="left:889px;top:446px;width:77px;height:30px;background:#f4f5f7;border-radius:5px"></div>
<div class="t" style="left:898.7px;top:453.00px;font-size:16.2px;font-weight:400;color:#1a1a1a;-webkit-text-stroke:0.55px currentColor;">Created</div>
<div class="t" style="left:1129px;top:454.00px;font-size:16.9px;font-weight:400;color:#1a1a1a;">June 23rd 2025, 6:27:18 pm</div>
<svg class="b" style="left:1379px;top:445px;" width="30" height="30" viewBox="0 0 30 30" fill="none"><defs><linearGradient id="ag" x1=".15" y1="0" x2=".75" y2="1"><stop offset="0" stop-color="#07c9f7"/><stop offset=".5" stop-color="#3d74f2"/><stop offset="1" stop-color="#7a2ff0"/></linearGradient></defs><circle cx="15" cy="15" r="15" fill="url(#ag)"/><path d="M13.2 12.3 L16.6 11.8 L19.6 25.4 L16.2 26 Z" fill="#f8a51c"/><path d="M6.2 7 L20 4.9 L20.7 9.5 L7.5 12.9 Z" fill="#fff" stroke="#fff" stroke-width="1.6" stroke-linejoin="round"/><circle cx="11.4" cy="9.1" r="1.7" stroke="#4f7df2" stroke-width="1.3" fill="none"/><circle cx="15" cy="8.4" r="1.7" stroke="#7d5cf0" stroke-width="1.3" fill="none"/></svg>
<div class="t" style="left:1420px;top:454.00px;font-size:16.6px;font-weight:400;color:#1a1a1a;">Atlassian</div>
<div class="b" style="left:1629px;top:447px;width:131px;height:28.5px;background:#dcfff1;border-radius:4px"></div>
<div class="t" style="left:1630px;top:453.00px;font-size:17.05px;font-weight:400;color:#1a1a1a;">Monday 6:27 PM</div>
<svg class="b" style="left:405px;top:527.5px;" width="13" height="16" viewBox="0 0 13 16" fill="none"><path d="M1.4 0.3 L10.6 7.3 L1.4 14" stroke="#1a1a1a" stroke-width="1.6"/></svg>
<div class="t" style="left:417.8px;top:516.00px;font-size:12.8px;font-weight:400;color:#626262;-webkit-text-stroke:0.4px currentColor;">2</div>
<svg class="b" style="left:447px;top:525.4px;" width="17.5" height="17.5" viewBox="0 0 18 18" fill="none"><rect width="18" height="18" rx="3" fill="#63ba3c"/><path d="M5.5 4.5 H12.5 V13.5 L9 10.8 L5.5 13.5 Z" fill="#fff"/></svg>
<div class="t" style="left:471.8px;top:528.00px;font-size:16.5px;font-weight:400;color:#0055cc;-webkit-text-stroke:0.4px currentColor;">TES-2483</div>
<div class="t" style="left:629px;top:527.00px;font-size:18.6px;font-weight:400;color:#172b4d;-webkit-text-stroke:0.4px currentColor;">Work item field update</div>
<div class="b" style="left:889px;top:519px;width:50px;height:29.5px;background:#f4f5f7;border-radius:5px"></div>
<div class="t" style="left:898.7px;top:528.00px;font-size:16.4px;font-weight:400;color:#172b4d;-webkit-text-stroke:0.55px currentColor;">Link</div>
<div class="t" style="left:1129px;top:528.00px;font-size:17.5px;font-weight:400;color:#172b4d;-webkit-text-stroke:0.4px currentColor;">June 24th 2025, 4:44:01 pm</div>
<div class="b" style="left:1379px;top:519.0px;width:30px;height:30.0px;background:#172b4d;border-radius:50%"></div>
<div class="t" style="left:1394px;top:529.00px;font-size:12.8px;font-weight:400;color:#fff;transform:translateX(-50%);-webkit-text-stroke:0.4px currentColor;">BA</div>
<div class="t" style="left:1420px;top:525.00px;font-size:18.2px;font-weight:400;color:#172b4d;-webkit-text-stroke:0.4px currentColor;">Brini Mohamed Ayachi</div>
<div class="b" style="left:1629px;top:511px;width:84px;height:47px;background:#ffeceb;border-radius:5px"></div>
<div class="t" style="left:1649px;top:528.00px;font-size:17.8px;font-weight:400;color:#ae2e24;text-decoration:line-through;-webkit-text-stroke:0.4px currentColor;">None</div>
<div class="t" style="left:1723px;top:528.00px;font-size:17.6px;font-weight:400;color:#172b4d;">--&gt;</div>
<div class="b" style="left:1759px;top:521px;width:123px;height:27px;background:#dcfff1;border-radius:4px 0 0 4px;overflow:hidden"><div class="t" style="left:1px;top:7px;font-size:17.2px;font-weight:400;-webkit-text-stroke:0.4px #216e4e;color:#216e4e">This issue cloned by TES-2482</div></div>
<svg class="b" style="left:405px;top:607px;" width="13" height="16" viewBox="0 0 13 16" fill="none"><path d="M1.4 0.3 L10.6 7.3 L1.4 14" stroke="#1a1a1a" stroke-width="1.6"/></svg>
<div class="t" style="left:417.8px;top:595.00px;font-size:12.8px;font-weight:400;color:#626262;-webkit-text-stroke:0.4px currentColor;">2</div>
<svg class="b" style="left:447px;top:604.6999999999999px;" width="18" height="18" viewBox="0 0 18 18" fill="none"><rect width="18" height="18" rx="3" fill="#4bade8"/><path d="M4.8 9.3 L7.8 12.2 L13.2 5.8" stroke="#fff" stroke-width="2.2" stroke-linecap="round" stroke-linejoin="round"/></svg>
<div class="t" style="left:471.8px;top:607.00px;font-size:16.5px;font-weight:400;color:#0055cc;-webkit-text-stroke:0.4px currentColor;">TES-2207</div>
<div class="t" style="left:629px;top:606.00px;font-size:18.6px;font-weight:400;color:#172b4d;-webkit-text-stroke:0.4px currentColor;">Work item field update</div>
<div class="b" style="left:879px;top:588px;width:225px;height:52px;background:#b68e94;border-radius:4px"></div>
<div class="b" style="left:889px;top:600px;width:86px;height:30px;background:#f4f5f7;border-radius:5px"></div>
<div class="t" style="left:898.7px;top:608.00px;font-size:16.5px;font-weight:400;color:#1a1a1a;-webkit-text-stroke:0.55px currentColor;">Due date</div>
<svg class="b" style="left:989px;top:607px;" width="21" height="18" viewBox="0 0 21 18" fill="none"><defs><linearGradient id="wg" x1="0" y1="0" x2="0" y2="1"><stop offset="0" stop-color="#f7cf4a"/><stop offset="1" stop-color="#f69c45"/></linearGradient></defs><path d="M10 0.8 L19.6 17.3 H0.4 Z" fill="url(#wg)" stroke="#f6a947" stroke-width=".8" stroke-linejoin="round"/><path d="M10 5.2 V11.2" stroke="#4b4b5c" stroke-width="1.6"/><circle cx="10" cy="13.6" r=".95" fill="#4b4b5c"/></svg>
<div class="t" style="left:1129px;top:607.00px;font-size:17.5px;font-weight:400;color:#172b4d;-webkit-text-stroke:0.4px currentColor;">June 24th 2025, 1:07:02 pm</div>
<div class="b" style="left:1379px;top:598.5px;width:30px;height:30.0px;background:#172b4d;border-radius:50%"></div>
<div class="t" style="left:1394px;top:608.00px;font-size:12.8px;font-weight:400;color:#fff;transform:translateX(-50%);-webkit-text-stroke:0.4px currentColor;">BA</div>
<div class="t" style="left:1420px;top:604.00px;font-size:18.2px;font-weight:400;color:#172b4d;-webkit-text-stroke:0.4px currentColor;">Brini Mohamed Ayachi</div>
<div class="b" style="left:1629px;top:590px;width:84px;height:48.299999999999955px;background:#ffeceb;border-radius:5px"></div>
<div class="t" style="left:1649px;top:607.00px;font-size:17.8px;font-weight:400;color:#ae2e24;text-decoration:line-through;-webkit-text-stroke:0.4px currentColor;">None</div>
<div class="t" style="left:1723px;top:607.00px;font-size:17.6px;font-weight:400;color:#172b4d;">--&gt;</div>
<div class="b" style="left:1759px;top:600px;width:123px;height:28px;background:#dcfff1;border-radius:4px 0 0 4px;overflow:hidden"><div class="t" style="left:1px;top:7px;font-size:17.2px;font-weight:400;-webkit-text-stroke:0.4px #216e4e;color:#216e4e">2025-06-26 00:00:00</div></div>
<svg class="b" style="left:405px;top:687px;" width="13" height="16" viewBox="0 0 13 16" fill="none"><path d="M1.4 0.3 L10.6 7.3 L1.4 14" stroke="#1a1a1a" stroke-width="1.6"/></svg>
<div class="t" style="left:417.8px;top:675.00px;font-size:12.8px;font-weight:400;color:#626262;-webkit-text-stroke:0.4px currentColor;">2</div>
<svg class="b" style="left:447px;top:684.6px;" width="18" height="18" viewBox="0 0 18 18" fill="none"><rect width="18" height="18" rx="3" fill="#4bade8"/><path d="M4.8 9.3 L7.8 12.2 L13.2 5.8" stroke="#fff" stroke-width="2.2" stroke-linecap="round" stroke-linejoin="round"/></svg>
<div class="t" style="left:471.8px;top:687.00px;font-size:16.5px;font-weight:400;color:#0055cc;-webkit-text-stroke:0.4px currentColor;">TES-2204</div>
<div class="t" style="left:629px;top:686.00px;font-size:18.6px;font-weight:400;color:#172b4d;-webkit-text-stroke:0.4px currentColor;">Work item field update</div>
<div class="b" style="left:879px;top:668px;width:225px;height:52px;background:#b68e94;border-radius:4px"></div>
<div class="b" style="left:889px;top:680px;width:86px;height:30px;background:#f4f5f7;border-radius:5px"></div>
<div class="t" style="left:898.7px;top:688.00px;font-size:16.5px;font-weight:400;color:#1a1a1a;-webkit-text-stroke:0.55px currentColor;">Due date</div>
<svg class="b" style="left:989px;top:687px;" width="21" height="18" viewBox="0 0 21 18" fill="none"><defs><linearGradient id="wg" x1="0" y1="0" x2="0" y2="1"><stop offset="0" stop-color="#f7cf4a"/><stop offset="1" stop-color="#f69c45"/></linearGradient></defs><path d="M10 0.8 L19.6 17.3 H0.4 Z" fill="url(#wg)" stroke="#f6a947" stroke-width=".8" stroke-linejoin="round"/><path d="M10 5.2 V11.2" stroke="#4b4b5c" stroke-width="1.6"/><circle cx="10" cy="13.6" r=".95" fill="#4b4b5c"/></svg>
<div class="t" style="left:1129px;top:687.00px;font-size:17.5px;font-weight:400;color:#172b4d;-webkit-text-stroke:0.4px currentColor;">June 24th 2025, 1:06:47 pm</div>
<div class="b" style="left:1379px;top:678.5px;width:30px;height:30.0px;background:#172b4d;border-radius:50%"></div>
<div class="t" style="left:1394px;top:688.00px;font-size:12.8px;font-weight:400;color:#fff;transform:translateX(-50%);-webkit-text-stroke:0.4px currentColor;">BA</div>
<div class="t" style="left:1420px;top:684.00px;font-size:18.2px;font-weight:400;color:#172b4d;-webkit-text-stroke:0.4px currentColor;">Brini Mohamed Ayachi</div>
<div class="b" style="left:1629px;top:670.3px;width:84px;height:47.90000000000009px;background:#ffeceb;border-radius:5px"></div>
<div class="t" style="left:1649px;top:687.00px;font-size:17.8px;font-weight:400;color:#ae2e24;text-decoration:line-through;-webkit-text-stroke:0.4px currentColor;">None</div>
<div class="t" style="left:1723px;top:687.00px;font-size:17.6px;font-weight:400;color:#172b4d;">--&gt;</div>
<div class="b" style="left:1759px;top:680px;width:123px;height:28px;background:#dcfff1;border-radius:4px 0 0 4px;overflow:hidden"><div class="t" style="left:1px;top:7px;font-size:17.2px;font-weight:400;-webkit-text-stroke:0.4px #216e4e;color:#216e4e">2025-06-22 00:00:00</div></div>
<div class="b" style="left:376px;top:774px;width:1528px;height:1px;background:#dfe1e6"></div>
<div class="t" style="left:389px;top:799.00px;font-size:17.2px;font-weight:400;color:#172b4d;">Total Work items:</div>
<div class="b" style="left:527px;top:791px;width:37px;height:29.5px;background:#0055cc;border-radius:5px"></div>
<div class="t" style="left:545.3px;top:800.00px;font-size:16.8px;font-weight:700;color:#fff;transform:translateX(-50%);letter-spacing:-1.1px;">112</div>
<div class="t" style="left:577px;top:800.00px;font-size:16.9px;font-weight:400;color:#626f86;">Last updated:</div>
<div class="t" style="left:688px;top:799.00px;font-size:17.4px;font-weight:400;color:#0055cc;-webkit-text-stroke:0.4px currentColor;">5:35:40 PM</div>
<div class="t" style="left:1221px;top:798.00px;font-size:17.3px;font-weight:400;color:#1d1d1f;">1-20 of 112 changes</div>
<svg class="b" style="left:1404px;top:797px;" width="12" height="17" viewBox="0 0 12 17" fill="none"><path d="M10 1.5 L2.5 8.5 L10 15.5" stroke="#bfbfbf" stroke-width="1.6"/></svg>
<div class="b" style="left:1438px;top:786px;width:33px;height:32.5px;border:1px solid #1677ff;border-radius:6px"></div>
<div class="t" style="left:1455px;top:798.00px;font-size:17.3px;font-weight:400;color:#1677ff;transform:translateX(-50%);">1</div>
<div class="t" style="left:1500px;top:798.00px;font-size:17.3px;font-weight:400;color:#1d1d1f;transform:translateX(-50%);">2</div>
<div class="t" style="left:1544.7px;top:798.00px;font-size:17.3px;font-weight:400;color:#1d1d1f;transform:translateX(-50%);">3</div>
<div class="t" style="left:1589.8px;top:798.00px;font-size:17.3px;font-weight:400;color:#1d1d1f;transform:translateX(-50%);">4</div>
<div class="t" style="left:1635px;top:798.00px;font-size:17.3px;font-weight:400;color:#1d1d1f;transform:translateX(-50%);">5</div>
<div class="t" style="left:1680px;top:798.00px;font-size:17.3px;font-weight:400;color:#1d1d1f;transform:translateX(-50%);">6</div>
<svg class="b" style="left:1720px;top:797px;" width="12" height="17" viewBox="0 0 12 17" fill="none"><path d="M2 1.5 L9.5 8.5 L2 15.5" stroke="#1a1a1a" stroke-width="1.6"/></svg>
<div class="b" style="left:1758.5px;top:785px;width:123px;height:37.5px;border:1px solid #d9d9d9;border-radius:6px;background:#fff"></div>
<div class="t" style="left:1772.4px;top:798.00px;font-size:17.5px;font-weight:400;color:#1d1d1f;">20 / page</div>
<svg class="b" style="left:1856px;top:800px;" width="13" height="9" viewBox="0 0 13 9" fill="none"><path d="M1 1 L6.5 7.5 L12 1" stroke="#bfbfbf" stroke-width="1.4"/></svg>
</body></html>
